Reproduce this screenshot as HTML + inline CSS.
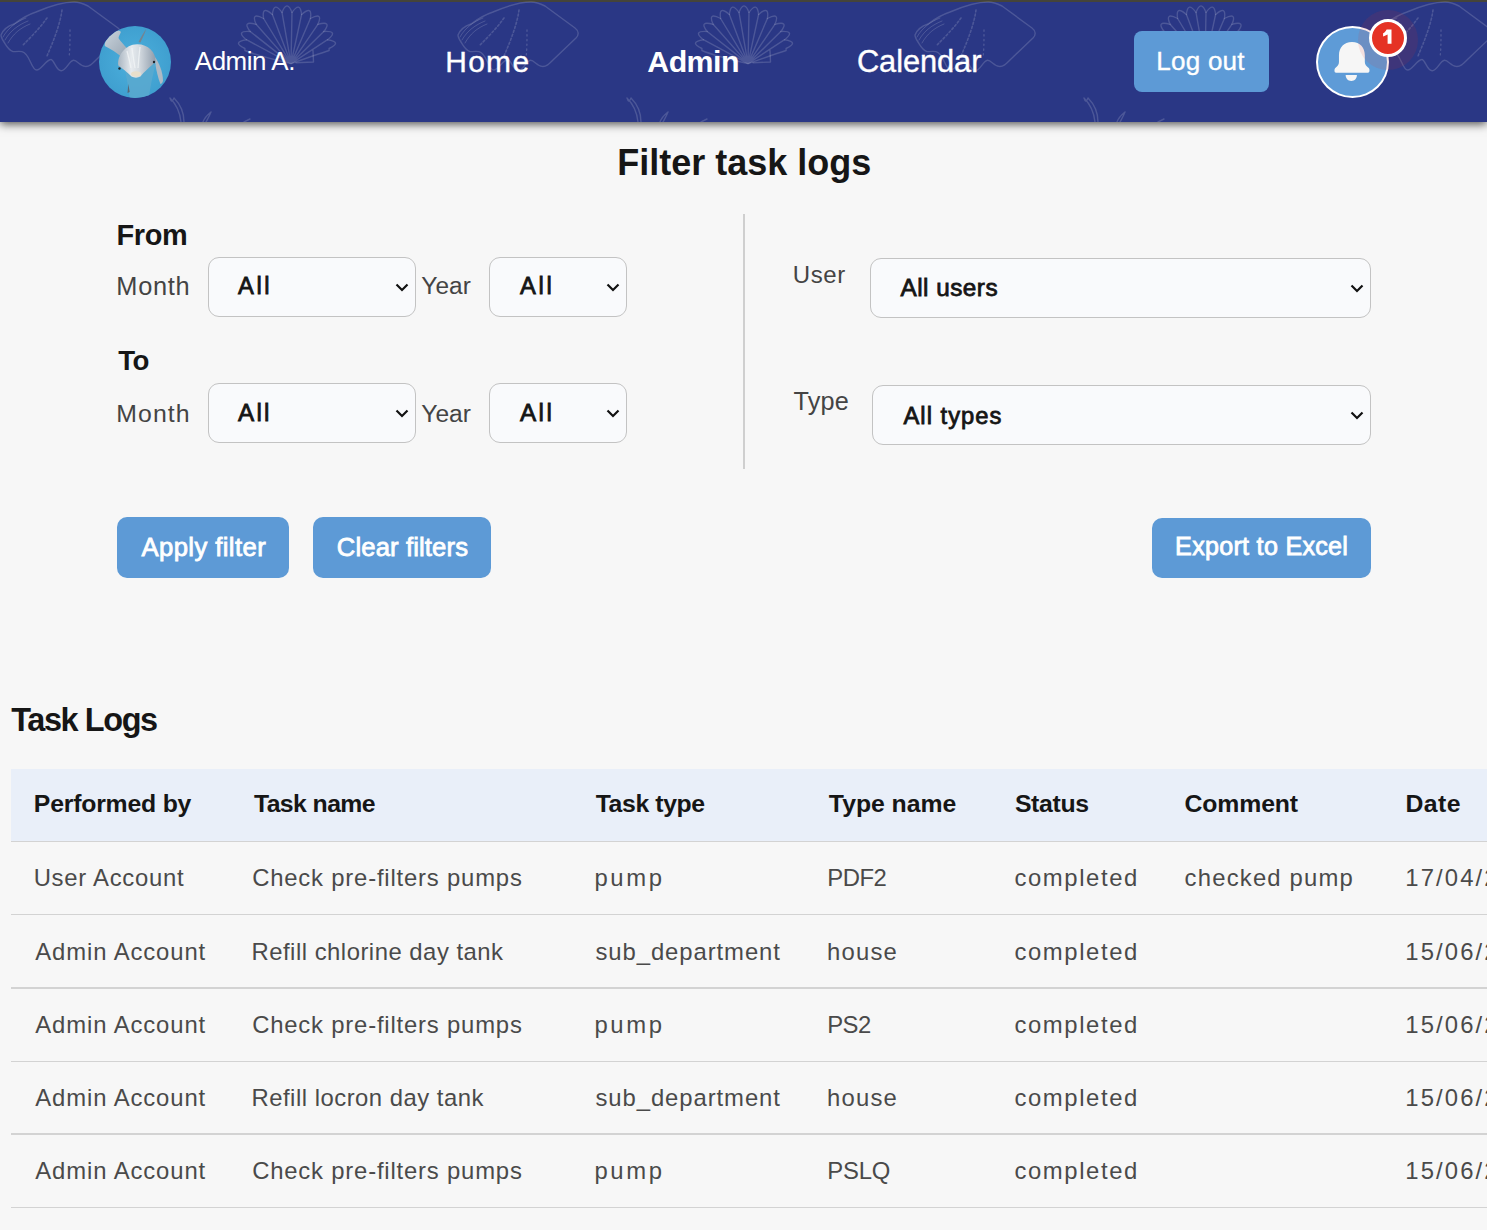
<!DOCTYPE html>
<html lang="en">
<head>
<meta charset="utf-8">
<title>Task Logs</title>
<style>
*{box-sizing:border-box;margin:0;padding:0}
html,body{width:1487px;height:1230px;overflow:hidden;background:#f7f7f7;font-family:"Liberation Sans",sans-serif}
.t{position:absolute;white-space:nowrap;z-index:3}
.nav{position:absolute;left:0;top:0;width:1487px;height:122px;background:#2a3785;box-shadow:0 2px 9px rgba(0,0,0,.7);z-index:2}
.nav .topline{position:absolute;left:0;top:0;width:100%;height:2px;background:#45443a}
.nav svg.pat{position:absolute;left:0;top:0}
.avatar{position:absolute;left:99px;top:25.7px;width:72px;height:72px;border-radius:50%;overflow:hidden}
.btn{position:absolute;background:#5d9ad6;border-radius:10px}
.bell{position:absolute;left:1316px;top:26px;width:73px;height:72px;border-radius:50%;background:#5e9bd7;border:2.5px solid #fff}
.halo{position:absolute;left:1357.5px;top:10px;width:60px;height:60px;border-radius:50%;background:rgba(229,50,36,.11)}
.badge{position:absolute;left:1369px;top:19px;width:38px;height:38px;border-radius:50%;background:#e53224;border:3px solid #fff}
.sel{position:absolute;background:#f9fafc;border:1.3px solid #c3c3c3;border-radius:11px}
.sel svg{position:absolute}
.divider{position:absolute;left:743px;top:214px;width:2px;height:255px;background:#cfcfcf}
.thead{position:absolute;left:11px;top:769px;width:1476px;height:72.5px;background:#e9eff9}
.hr{position:absolute;left:11px;width:1476px;height:1.3px;background:#d3d3d3}
</style>
</head>
<body>
<header class="nav">
  <div class="topline"></div>
  <svg class="pat" width="1487" height="122" viewBox="0 0 1487 122">
    
    <g transform="translate(0,0)" fill="none" stroke="rgba(255,255,255,0.16)" stroke-width="1.4" stroke-linejoin="round" stroke-linecap="round"><g>
<path d="M1,35 C3,30 8,26 14,24 C22,18 30,14 36,12 C50,6 65,2 74,2 C80,2 84,4 88,6 L118,28 C122,31 122,35 119,38 L97,59 C92,64 89,67 85,66.4 C80,66 77,60 73.4,60.3 C69,61 66,71 61.2,70.8 C56,71 54,59 50.7,59.5 C46,60 41,70 36.7,70 C31,70 30,53 22,51.6 C17,51 14,52 13.1,51.6 C8,50 6,45 4,42 C2,39 1,37 1,35 Z"/>
<path stroke-width="1.0" d="M3,37 C8,28 16,22 26,18 M5,40 C10,31 18,25 28,21 M8,43 C13,34 20,28 30,24"/>
<path stroke-dasharray="2 2.2" stroke-width="1.6" d="M47,18 C40,28 30,38 22,46 M62,10 C60,25 53,42 47,56"/>
<path stroke-dasharray="1.2 3.5" stroke-width="1.4" d="M70,30 C70,40 70,50 69,58"/>
<path d="M291.0,63.6 Q258.0,56.0 244.9,50.5 L244.9,48.5 Q231.3,42.1 246.4,39.7 Q234.9,30.6 250.2,31.5 Q241.4,20.3 256.1,24.3 Q250.4,11.5 263.6,18.5 Q261.4,4.9 272.4,14.5 Q273.8,0.8 282.0,12.4 Q287.0,-0.6 292.0,12.4 Q300.2,0.8 301.6,14.5 Q312.6,4.9 310.4,18.5 Q323.6,11.5 317.9,24.3 Q332.6,20.3 323.8,31.5 Q339.1,30.6 327.6,39.7 Q342.7,42.1 329.1,48.5 L329.1,50.5 Q318.0,54.0 291.0,63.6"/>
<path d="M291.0,63.6 L246.4,39.7 M291.0,63.6 L250.2,31.5 M291.0,63.6 L256.1,24.3 M291.0,63.6 L263.6,18.5 M291.0,63.6 L272.4,14.5 M291.0,63.6 L282.0,12.4 M291.0,63.6 L292.0,12.4 M291.0,63.6 L301.6,14.5 M291.0,63.6 L310.4,18.5 M291.0,63.6 L317.9,24.3 M291.0,63.6 L323.8,31.5 M291.0,63.6 L327.6,39.7 "/>
<path d="M313,50.5 L313.5,62 L296,62.8"/>
<path d="M170,98 C176,104 180,112 181,122 M174,98 C182,106 184,114 184,122 M170,98 C171,101 172,103 174,98"/>
<path d="M211,112 C206,116 204,119 203,122 M211,112 C209,117 207,120 206,122"/>
<path d="M250,119 L244,122"/>
</g></g><g transform="translate(457,0)" fill="none" stroke="rgba(255,255,255,0.16)" stroke-width="1.4" stroke-linejoin="round" stroke-linecap="round"><g>
<path d="M1,35 C3,30 8,26 14,24 C22,18 30,14 36,12 C50,6 65,2 74,2 C80,2 84,4 88,6 L118,28 C122,31 122,35 119,38 L97,59 C92,64 89,67 85,66.4 C80,66 77,60 73.4,60.3 C69,61 66,71 61.2,70.8 C56,71 54,59 50.7,59.5 C46,60 41,70 36.7,70 C31,70 30,53 22,51.6 C17,51 14,52 13.1,51.6 C8,50 6,45 4,42 C2,39 1,37 1,35 Z"/>
<path stroke-width="1.0" d="M3,37 C8,28 16,22 26,18 M5,40 C10,31 18,25 28,21 M8,43 C13,34 20,28 30,24"/>
<path stroke-dasharray="2 2.2" stroke-width="1.6" d="M47,18 C40,28 30,38 22,46 M62,10 C60,25 53,42 47,56"/>
<path stroke-dasharray="1.2 3.5" stroke-width="1.4" d="M70,30 C70,40 70,50 69,58"/>
<path d="M291.0,63.6 Q258.0,56.0 244.9,50.5 L244.9,48.5 Q231.3,42.1 246.4,39.7 Q234.9,30.6 250.2,31.5 Q241.4,20.3 256.1,24.3 Q250.4,11.5 263.6,18.5 Q261.4,4.9 272.4,14.5 Q273.8,0.8 282.0,12.4 Q287.0,-0.6 292.0,12.4 Q300.2,0.8 301.6,14.5 Q312.6,4.9 310.4,18.5 Q323.6,11.5 317.9,24.3 Q332.6,20.3 323.8,31.5 Q339.1,30.6 327.6,39.7 Q342.7,42.1 329.1,48.5 L329.1,50.5 Q318.0,54.0 291.0,63.6"/>
<path d="M291.0,63.6 L246.4,39.7 M291.0,63.6 L250.2,31.5 M291.0,63.6 L256.1,24.3 M291.0,63.6 L263.6,18.5 M291.0,63.6 L272.4,14.5 M291.0,63.6 L282.0,12.4 M291.0,63.6 L292.0,12.4 M291.0,63.6 L301.6,14.5 M291.0,63.6 L310.4,18.5 M291.0,63.6 L317.9,24.3 M291.0,63.6 L323.8,31.5 M291.0,63.6 L327.6,39.7 "/>
<path d="M313,50.5 L313.5,62 L296,62.8"/>
<path d="M170,98 C176,104 180,112 181,122 M174,98 C182,106 184,114 184,122 M170,98 C171,101 172,103 174,98"/>
<path d="M211,112 C206,116 204,119 203,122 M211,112 C209,117 207,120 206,122"/>
<path d="M250,119 L244,122"/>
</g></g><g transform="translate(914,0)" fill="none" stroke="rgba(255,255,255,0.16)" stroke-width="1.4" stroke-linejoin="round" stroke-linecap="round"><g>
<path d="M1,35 C3,30 8,26 14,24 C22,18 30,14 36,12 C50,6 65,2 74,2 C80,2 84,4 88,6 L118,28 C122,31 122,35 119,38 L97,59 C92,64 89,67 85,66.4 C80,66 77,60 73.4,60.3 C69,61 66,71 61.2,70.8 C56,71 54,59 50.7,59.5 C46,60 41,70 36.7,70 C31,70 30,53 22,51.6 C17,51 14,52 13.1,51.6 C8,50 6,45 4,42 C2,39 1,37 1,35 Z"/>
<path stroke-width="1.0" d="M3,37 C8,28 16,22 26,18 M5,40 C10,31 18,25 28,21 M8,43 C13,34 20,28 30,24"/>
<path stroke-dasharray="2 2.2" stroke-width="1.6" d="M47,18 C40,28 30,38 22,46 M62,10 C60,25 53,42 47,56"/>
<path stroke-dasharray="1.2 3.5" stroke-width="1.4" d="M70,30 C70,40 70,50 69,58"/>
<path d="M291.0,63.6 Q258.0,56.0 244.9,50.5 L244.9,48.5 Q231.3,42.1 246.4,39.7 Q234.9,30.6 250.2,31.5 Q241.4,20.3 256.1,24.3 Q250.4,11.5 263.6,18.5 Q261.4,4.9 272.4,14.5 Q273.8,0.8 282.0,12.4 Q287.0,-0.6 292.0,12.4 Q300.2,0.8 301.6,14.5 Q312.6,4.9 310.4,18.5 Q323.6,11.5 317.9,24.3 Q332.6,20.3 323.8,31.5 Q339.1,30.6 327.6,39.7 Q342.7,42.1 329.1,48.5 L329.1,50.5 Q318.0,54.0 291.0,63.6"/>
<path d="M291.0,63.6 L246.4,39.7 M291.0,63.6 L250.2,31.5 M291.0,63.6 L256.1,24.3 M291.0,63.6 L263.6,18.5 M291.0,63.6 L272.4,14.5 M291.0,63.6 L282.0,12.4 M291.0,63.6 L292.0,12.4 M291.0,63.6 L301.6,14.5 M291.0,63.6 L310.4,18.5 M291.0,63.6 L317.9,24.3 M291.0,63.6 L323.8,31.5 M291.0,63.6 L327.6,39.7 "/>
<path d="M313,50.5 L313.5,62 L296,62.8"/>
<path d="M170,98 C176,104 180,112 181,122 M174,98 C182,106 184,114 184,122 M170,98 C171,101 172,103 174,98"/>
<path d="M211,112 C206,116 204,119 203,122 M211,112 C209,117 207,120 206,122"/>
<path d="M250,119 L244,122"/>
</g></g><g transform="translate(1371,0)" fill="none" stroke="rgba(255,255,255,0.16)" stroke-width="1.4" stroke-linejoin="round" stroke-linecap="round"><g>
<path d="M1,35 C3,30 8,26 14,24 C22,18 30,14 36,12 C50,6 65,2 74,2 C80,2 84,4 88,6 L118,28 C122,31 122,35 119,38 L97,59 C92,64 89,67 85,66.4 C80,66 77,60 73.4,60.3 C69,61 66,71 61.2,70.8 C56,71 54,59 50.7,59.5 C46,60 41,70 36.7,70 C31,70 30,53 22,51.6 C17,51 14,52 13.1,51.6 C8,50 6,45 4,42 C2,39 1,37 1,35 Z"/>
<path stroke-width="1.0" d="M3,37 C8,28 16,22 26,18 M5,40 C10,31 18,25 28,21 M8,43 C13,34 20,28 30,24"/>
<path stroke-dasharray="2 2.2" stroke-width="1.6" d="M47,18 C40,28 30,38 22,46 M62,10 C60,25 53,42 47,56"/>
<path stroke-dasharray="1.2 3.5" stroke-width="1.4" d="M70,30 C70,40 70,50 69,58"/>
<path d="M291.0,63.6 Q258.0,56.0 244.9,50.5 L244.9,48.5 Q231.3,42.1 246.4,39.7 Q234.9,30.6 250.2,31.5 Q241.4,20.3 256.1,24.3 Q250.4,11.5 263.6,18.5 Q261.4,4.9 272.4,14.5 Q273.8,0.8 282.0,12.4 Q287.0,-0.6 292.0,12.4 Q300.2,0.8 301.6,14.5 Q312.6,4.9 310.4,18.5 Q323.6,11.5 317.9,24.3 Q332.6,20.3 323.8,31.5 Q339.1,30.6 327.6,39.7 Q342.7,42.1 329.1,48.5 L329.1,50.5 Q318.0,54.0 291.0,63.6"/>
<path d="M291.0,63.6 L246.4,39.7 M291.0,63.6 L250.2,31.5 M291.0,63.6 L256.1,24.3 M291.0,63.6 L263.6,18.5 M291.0,63.6 L272.4,14.5 M291.0,63.6 L282.0,12.4 M291.0,63.6 L292.0,12.4 M291.0,63.6 L301.6,14.5 M291.0,63.6 L310.4,18.5 M291.0,63.6 L317.9,24.3 M291.0,63.6 L323.8,31.5 M291.0,63.6 L327.6,39.7 "/>
<path d="M313,50.5 L313.5,62 L296,62.8"/>
<path d="M170,98 C176,104 180,112 181,122 M174,98 C182,106 184,114 184,122 M170,98 C171,101 172,103 174,98"/>
<path d="M211,112 C206,116 204,119 203,122 M211,112 C209,117 207,120 206,122"/>
<path d="M250,119 L244,122"/>
</g></g>
  </svg>
  <div class="avatar">
    <svg width="72" height="72" viewBox="0 0 72 72">
      <defs><radialGradient id="wg" cx="0.5" cy="0.5" r="0.6"><stop offset="0" stop-color="#4cb0dd"/><stop offset="1" stop-color="#3d9ccd"/></radialGradient>
      <linearGradient id="hg" x1="0" y1="0" x2="1" y2="0"><stop offset="0" stop-color="#aab6c2"/><stop offset="0.35" stop-color="#e6eaee"/><stop offset="0.55" stop-color="#d6dce2"/><stop offset="1" stop-color="#8f9cab"/></linearGradient>
      <linearGradient id="fg" x1="0" y1="0" x2="1" y2="1"><stop offset="0" stop-color="#c9d3dc"/><stop offset="1" stop-color="#9aa7b4"/></linearGradient></defs>
      <rect width="72" height="72" fill="url(#wg)"/>
      <path d="M5.8,17.7 C7,13 11,7 15.3,4.9 C18,4 22,5 21.9,6 C21,9 19,11 19.7,12.6 C22,16 25,19 27.8,22.1 L21.7,30.2 C18,27 12,23 5.8,20 Z" fill="url(#fg)"/>
      <path d="M47.3,2.4 C46,7 43,13 41.4,16.6 L39.5,16 C42,11 45,6 47.3,2.4 Z" fill="#76838f"/>
      <path d="M55.2,30 C60,36 64,46 64,55 C63.5,57 62,58 61.4,57.9 C59,52 57.5,45 56.6,40 Z" fill="#aeb9c4"/>
      <path d="M25.6,41.5 C27,50 29,58 30.7,72 L50,72 C51,64 52,57 56.6,38 Z" fill="#5aa9cf" opacity="0.85"/>
      <path d="M29.3,58 L30.7,66 L28.5,67 Z" fill="#596774"/>
      <path d="M19.3,39.5 C18,30 26,18.5 38,18.2 C49,18 57,26 56.6,35.8 C52,40 45,46 41.5,50.5 C39,52 35,52 32.5,50.5 C28,46 23,42 19.3,39.5 Z" fill="url(#hg)"/>
      <path d="M33,22 C34,30 35,36 36,42 M41,21 C40,29 39.5,35 39,42 M28,25 C30,32 31,37 32,42" stroke="#f4f6f8" stroke-width="1.3" fill="none" opacity="0.7"/>
      <ellipse cx="37" cy="48" rx="5" ry="2.8" fill="#e9dfcb"/>
      <circle cx="20.5" cy="42.5" r="1.2" fill="#1d2228"/><circle cx="55" cy="36" r="1.2" fill="#1d2228"/>
    </svg>
  </div>
  <div class="btn" style="left:1134px;top:31.3px;width:135px;height:60.6px;border-radius:8px"></div>
  <div class="bell">
    <svg style="position:absolute;left:16px;top:14.3px" width="36" height="39" viewBox="0 0 35 38">
      <path fill="#f6f6f6" d="M17.5,0 C9.5,0 4.8,5.5 4.8,13 L4.8,19.5 C4.8,22 3.5,23.5 1.5,25 C0,26 0,29.9 2,29.9 L33,29.9 C35,29.9 35,26 33.5,25 C31.5,23.5 30,22 30,19.5 L30,13 C30,5.5 25.5,0 17.5,0 Z M11.3,32.2 L22.3,32.2 C22.3,35.5 20.3,38 16.8,38 C13.5,38 11.3,35.5 11.3,32.2 Z"/>
    </svg>
  </div>
  <div class="halo"></div>
  <div class="badge"><svg style="position:absolute;left:-3px;top:-3px" width="38" height="38" viewBox="1369 19 38 38"><path fill="#fff" d="M1386.6,29.4 L1391.5,29.4 L1391.5,43.8 L1387.6,43.8 L1387.6,34.6 C1386.3,35.4 1384.7,36.1 1383.1,36.5 L1383.1,33.2 C1384.6,32.6 1385.8,31.2 1386.6,29.4 Z"/></svg></div>
</header>
<main>
  <div class="divider"></div>
  <div class="sel" style="left:207.5px;top:257.3px;width:208.5px;height:59.5px"><svg style="right:6px;top:25px" width="14" height="9" viewBox="0 0 14 9"><polyline points="1.5,1.5 7,7 12.5,1.5" fill="none" stroke="#111" stroke-width="2.2"/></svg></div>
  <div class="sel" style="left:489.2px;top:257.3px;width:137.7px;height:59.5px"><svg style="right:6px;top:25px" width="14" height="9" viewBox="0 0 14 9"><polyline points="1.5,1.5 7,7 12.5,1.5" fill="none" stroke="#111" stroke-width="2.2"/></svg></div>
  <div class="sel" style="left:207.5px;top:383.3px;width:208.5px;height:59.5px"><svg style="right:6px;top:25px" width="14" height="9" viewBox="0 0 14 9"><polyline points="1.5,1.5 7,7 12.5,1.5" fill="none" stroke="#111" stroke-width="2.2"/></svg></div>
  <div class="sel" style="left:489.2px;top:383.3px;width:137.7px;height:59.5px"><svg style="right:6px;top:25px" width="14" height="9" viewBox="0 0 14 9"><polyline points="1.5,1.5 7,7 12.5,1.5" fill="none" stroke="#111" stroke-width="2.2"/></svg></div>
  <div class="sel" style="left:870.3px;top:258px;width:500.7px;height:59.6px"><svg style="right:6px;top:25px" width="14" height="9" viewBox="0 0 14 9"><polyline points="1.5,1.5 7,7 12.5,1.5" fill="none" stroke="#111" stroke-width="2.2"/></svg></div>
  <div class="sel" style="left:872.3px;top:385.2px;width:498.7px;height:59.5px"><svg style="right:6px;top:25px" width="14" height="9" viewBox="0 0 14 9"><polyline points="1.5,1.5 7,7 12.5,1.5" fill="none" stroke="#111" stroke-width="2.2"/></svg></div>
  <div class="btn" style="left:117.1px;top:517.4px;width:172.2px;height:60.2px"></div>
  <div class="btn" style="left:313px;top:517.4px;width:178px;height:60.2px"></div>
  <div class="btn" style="left:1151.6px;top:517.5px;width:219.2px;height:60px"></div>
  <div class="thead"></div>
  <div class="hr" style="top:840.8px"></div>
  <div class="hr" style="top:914.1px"></div>
  <div class="hr" style="top:987.3px"></div>
  <div class="hr" style="top:1061.1px"></div>
  <div class="hr" style="top:1133.4px"></div>
  <div class="hr" style="top:1207px"></div>
</main>
<div class="t" id="n_adminA" style="left:194.82px;top:48.82px;font-size:25.95px;line-height:25.95px;letter-spacing:-0.462px;font-weight:400;color:#ffffff;">Admin A.</div>
<div class="t" id="n_home" style="left:445.16px;top:46.63px;font-size:29.94px;line-height:29.94px;letter-spacing:1.349px;font-weight:400;color:#ffffff;-webkit-text-stroke:0.35px #ffffff;">Home</div>
<div class="t" id="n_admin" style="left:647.27px;top:46.84px;font-size:30.33px;line-height:30.33px;letter-spacing:-0.538px;font-weight:700;color:#ffffff;">Admin</div>
<div class="t" id="n_cal" style="left:856.96px;top:46.99px;font-size:30.81px;line-height:30.81px;letter-spacing:-0.078px;font-weight:400;color:#ffffff;-webkit-text-stroke:0.35px #ffffff;">Calendar</div>
<div class="t" id="n_logout" style="left:1156.24px;top:48.29px;font-size:26.02px;line-height:26.02px;letter-spacing:0.253px;font-weight:400;color:#ffffff;-webkit-text-stroke:0.35px #ffffff;">Log out</div>
<div class="t" id="f_title" style="left:617.34px;top:145.30px;font-size:36.00px;line-height:36.00px;letter-spacing:-0.005px;font-weight:700;color:#161616;">Filter task logs</div>
<div class="t" id="f_from" style="left:116.59px;top:221.35px;font-size:28.91px;line-height:28.91px;letter-spacing:-0.383px;font-weight:700;color:#161616;">From</div>
<div class="t" id="f_to" style="left:118.34px;top:346.68px;font-size:27.63px;line-height:27.63px;letter-spacing:-0.581px;font-weight:700;color:#161616;">To</div>
<div class="t" id="f_m1" style="left:116.29px;top:274.10px;font-size:25.40px;line-height:25.40px;letter-spacing:0.699px;font-weight:400;color:#444444;">Month</div>
<div class="t" id="f_m2" style="left:116.33px;top:401.88px;font-size:24.84px;line-height:24.84px;letter-spacing:1.068px;font-weight:400;color:#444444;">Month</div>
<div class="t" id="f_y1" style="left:421.27px;top:274.19px;font-size:24.42px;line-height:24.42px;letter-spacing:0.109px;font-weight:400;color:#444444;">Year</div>
<div class="t" id="f_y2" style="left:421.27px;top:402.02px;font-size:24.56px;line-height:24.56px;letter-spacing:0.017px;font-weight:400;color:#444444;">Year</div>
<div class="t" id="f_a1" style="left:238.00px;top:274.73px;font-size:23.74px;line-height:23.74px;letter-spacing:2.548px;font-weight:400;color:#151515;-webkit-text-stroke:0.8px #151515;">All</div>
<div class="t" id="f_a2" style="left:520.00px;top:274.73px;font-size:23.74px;line-height:23.74px;letter-spacing:2.708px;font-weight:400;color:#151515;-webkit-text-stroke:0.8px #151515;">All</div>
<div class="t" id="f_a3" style="left:238.00px;top:401.15px;font-size:24.29px;line-height:24.29px;letter-spacing:2.257px;font-weight:400;color:#151515;-webkit-text-stroke:0.8px #151515;">All</div>
<div class="t" id="f_a4" style="left:520.00px;top:401.15px;font-size:24.29px;line-height:24.29px;letter-spacing:2.417px;font-weight:400;color:#151515;-webkit-text-stroke:0.8px #151515;">All</div>
<div class="t" id="f_user" style="left:792.76px;top:262.80px;font-size:24.00px;line-height:24.00px;letter-spacing:0.627px;font-weight:400;color:#444444;">User</div>
<div class="t" id="f_type" style="left:793.49px;top:388.77px;font-size:25.26px;line-height:25.26px;letter-spacing:0.221px;font-weight:400;color:#444444;">Type</div>
<div class="t" id="f_au" style="left:900.56px;top:276.45px;font-size:24.29px;line-height:24.29px;letter-spacing:0.488px;font-weight:400;color:#151515;-webkit-text-stroke:0.8px #151515;">All users</div>
<div class="t" id="f_at" style="left:903.50px;top:404.83px;font-size:23.74px;line-height:23.74px;letter-spacing:1.026px;font-weight:400;color:#151515;-webkit-text-stroke:0.8px #151515;">All types</div>
<div class="t" id="b_apply" style="left:141.44px;top:534.96px;font-size:25.68px;line-height:25.68px;letter-spacing:0.399px;font-weight:400;color:#ffffff;-webkit-text-stroke:0.8px #ffffff;">Apply filter</div>
<div class="t" id="b_clear" style="left:336.78px;top:534.96px;font-size:25.68px;line-height:25.68px;letter-spacing:0.117px;font-weight:400;color:#ffffff;-webkit-text-stroke:0.8px #ffffff;">Clear filters</div>
<div class="t" id="b_export" style="left:1175.11px;top:533.84px;font-size:25.12px;line-height:25.12px;letter-spacing:0.281px;font-weight:400;color:#ffffff;-webkit-text-stroke:0.8px #ffffff;">Export to Excel</div>
<div class="t" id="t_title" style="left:11.24px;top:704.47px;font-size:32.45px;line-height:32.45px;letter-spacing:-1.395px;font-weight:700;color:#161616;">Task Logs</div>
<div class="t" id="h0" style="left:33.83px;top:792.00px;font-size:24.80px;line-height:24.80px;letter-spacing:-0.209px;font-weight:700;color:#161616;">Performed by</div>
<div class="t" id="h1" style="left:253.93px;top:792.00px;font-size:24.80px;line-height:24.80px;letter-spacing:-0.581px;font-weight:700;color:#161616;">Task name</div>
<div class="t" id="h2" style="left:595.69px;top:792.00px;font-size:24.80px;line-height:24.80px;letter-spacing:-0.389px;font-weight:700;color:#161616;">Task type</div>
<div class="t" id="h3" style="left:828.87px;top:792.00px;font-size:24.80px;line-height:24.80px;letter-spacing:-0.040px;font-weight:700;color:#161616;">Type name</div>
<div class="t" id="h4" style="left:1014.88px;top:792.00px;font-size:24.80px;line-height:24.80px;letter-spacing:-0.332px;font-weight:700;color:#161616;">Status</div>
<div class="t" id="h5" style="left:1184.57px;top:792.00px;font-size:24.80px;line-height:24.80px;letter-spacing:-0.143px;font-weight:700;color:#161616;">Comment</div>
<div class="t" id="h6" style="left:1405.51px;top:792.00px;font-size:24.80px;line-height:24.80px;letter-spacing:0.461px;font-weight:700;color:#161616;">Date</div>
<div class="t" id="r0c0" style="left:33.65px;top:866.07px;font-size:23.86px;line-height:23.86px;letter-spacing:0.738px;font-weight:400;color:#4a4a4a;">User Account</div>
<div class="t" id="r0c1" style="left:252.19px;top:866.07px;font-size:23.86px;line-height:23.86px;letter-spacing:0.805px;font-weight:400;color:#4a4a4a;">Check pre-filters pumps</div>
<div class="t" id="r0c2" style="left:594.51px;top:866.07px;font-size:23.86px;line-height:23.86px;letter-spacing:2.596px;font-weight:400;color:#4a4a4a;">pump</div>
<div class="t" id="r0c3" style="left:827.21px;top:866.07px;font-size:23.86px;line-height:23.86px;letter-spacing:-0.474px;font-weight:400;color:#4a4a4a;">PDF2</div>
<div class="t" id="r0c4" style="left:1014.43px;top:866.07px;font-size:23.86px;line-height:23.86px;letter-spacing:1.603px;font-weight:400;color:#4a4a4a;">completed</div>
<div class="t" id="r0c5" style="left:1184.61px;top:866.07px;font-size:23.86px;line-height:23.86px;letter-spacing:1.188px;font-weight:400;color:#4a4a4a;">checked pump</div>
<div class="t" id="r0c6" style="left:1405.33px;top:866.07px;font-size:23.86px;line-height:23.86px;letter-spacing:2.097px;font-weight:400;color:#4a4a4a;">17/04/2024</div>
<div class="t" id="r1c0" style="left:35.32px;top:940.27px;font-size:23.86px;line-height:23.86px;letter-spacing:0.896px;font-weight:400;color:#4a4a4a;">Admin Account</div>
<div class="t" id="r1c1" style="left:251.47px;top:940.27px;font-size:23.86px;line-height:23.86px;letter-spacing:0.502px;font-weight:400;color:#4a4a4a;">Refill chlorine day tank</div>
<div class="t" id="r1c2" style="left:595.46px;top:940.27px;font-size:23.86px;line-height:23.86px;letter-spacing:0.927px;font-weight:400;color:#4a4a4a;">sub_department</div>
<div class="t" id="r1c3" style="left:826.89px;top:940.27px;font-size:23.86px;line-height:23.86px;letter-spacing:1.241px;font-weight:400;color:#4a4a4a;">house</div>
<div class="t" id="r1c4" style="left:1014.43px;top:940.27px;font-size:23.86px;line-height:23.86px;letter-spacing:1.603px;font-weight:400;color:#4a4a4a;">completed</div>
<div class="t" id="r1c6" style="left:1405.33px;top:940.27px;font-size:23.86px;line-height:23.86px;letter-spacing:2.097px;font-weight:400;color:#4a4a4a;">15/06/2024</div>
<div class="t" id="r2c0" style="left:35.32px;top:1013.47px;font-size:23.86px;line-height:23.86px;letter-spacing:0.896px;font-weight:400;color:#4a4a4a;">Admin Account</div>
<div class="t" id="r2c1" style="left:252.19px;top:1013.47px;font-size:23.86px;line-height:23.86px;letter-spacing:0.805px;font-weight:400;color:#4a4a4a;">Check pre-filters pumps</div>
<div class="t" id="r2c2" style="left:594.51px;top:1013.47px;font-size:23.86px;line-height:23.86px;letter-spacing:2.596px;font-weight:400;color:#4a4a4a;">pump</div>
<div class="t" id="r2c3" style="left:827.21px;top:1013.47px;font-size:23.86px;line-height:23.86px;letter-spacing:-0.545px;font-weight:400;color:#4a4a4a;">PS2</div>
<div class="t" id="r2c4" style="left:1014.43px;top:1013.47px;font-size:23.86px;line-height:23.86px;letter-spacing:1.603px;font-weight:400;color:#4a4a4a;">completed</div>
<div class="t" id="r2c6" style="left:1405.33px;top:1013.47px;font-size:23.86px;line-height:23.86px;letter-spacing:2.097px;font-weight:400;color:#4a4a4a;">15/06/2024</div>
<div class="t" id="r3c0" style="left:35.32px;top:1085.67px;font-size:23.86px;line-height:23.86px;letter-spacing:0.896px;font-weight:400;color:#4a4a4a;">Admin Account</div>
<div class="t" id="r3c1" style="left:251.47px;top:1085.67px;font-size:23.86px;line-height:23.86px;letter-spacing:0.500px;font-weight:400;color:#4a4a4a;">Refill locron day tank</div>
<div class="t" id="r3c2" style="left:595.46px;top:1085.67px;font-size:23.86px;line-height:23.86px;letter-spacing:0.927px;font-weight:400;color:#4a4a4a;">sub_department</div>
<div class="t" id="r3c3" style="left:826.89px;top:1085.67px;font-size:23.86px;line-height:23.86px;letter-spacing:1.241px;font-weight:400;color:#4a4a4a;">house</div>
<div class="t" id="r3c4" style="left:1014.43px;top:1085.67px;font-size:23.86px;line-height:23.86px;letter-spacing:1.603px;font-weight:400;color:#4a4a4a;">completed</div>
<div class="t" id="r3c6" style="left:1405.33px;top:1085.67px;font-size:23.86px;line-height:23.86px;letter-spacing:2.097px;font-weight:400;color:#4a4a4a;">15/06/2024</div>
<div class="t" id="r4c0" style="left:35.32px;top:1158.87px;font-size:23.86px;line-height:23.86px;letter-spacing:0.896px;font-weight:400;color:#4a4a4a;">Admin Account</div>
<div class="t" id="r4c1" style="left:252.19px;top:1158.87px;font-size:23.86px;line-height:23.86px;letter-spacing:0.805px;font-weight:400;color:#4a4a4a;">Check pre-filters pumps</div>
<div class="t" id="r4c2" style="left:594.51px;top:1158.87px;font-size:23.86px;line-height:23.86px;letter-spacing:2.596px;font-weight:400;color:#4a4a4a;">pump</div>
<div class="t" id="r4c3" style="left:827.21px;top:1158.87px;font-size:23.86px;line-height:23.86px;letter-spacing:-0.203px;font-weight:400;color:#4a4a4a;">PSLQ</div>
<div class="t" id="r4c4" style="left:1014.43px;top:1158.87px;font-size:23.86px;line-height:23.86px;letter-spacing:1.603px;font-weight:400;color:#4a4a4a;">completed</div>
<div class="t" id="r4c6" style="left:1405.33px;top:1158.87px;font-size:23.86px;line-height:23.86px;letter-spacing:2.097px;font-weight:400;color:#4a4a4a;">15/06/2024</div>
</body>
</html>
